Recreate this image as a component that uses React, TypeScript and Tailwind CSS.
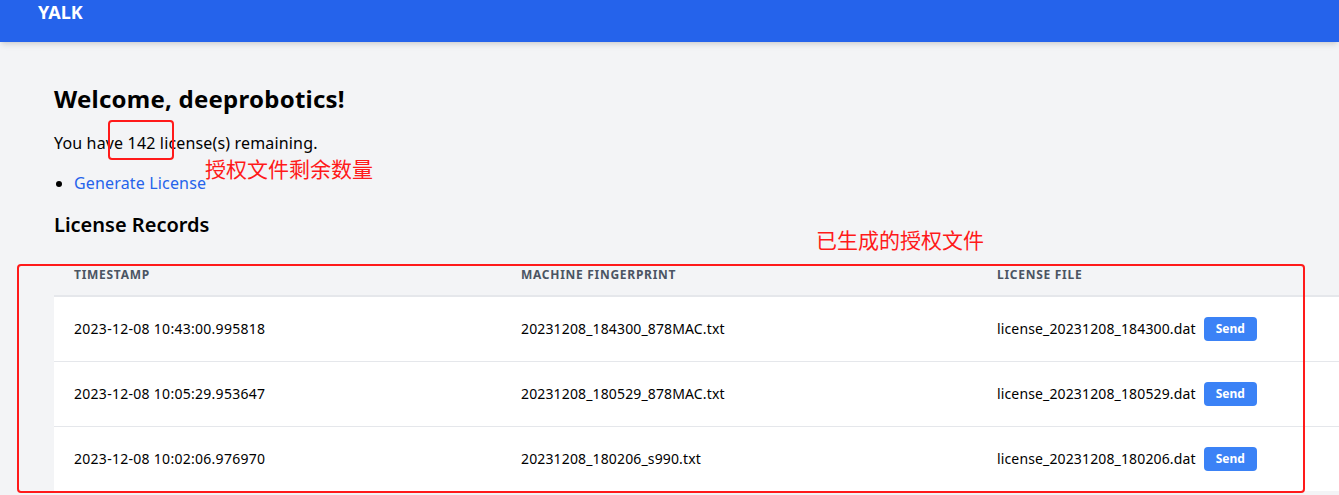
import React from "react";

const rows = [
  { ts: "2023-12-08 10:43:00.995818", fp: "20231208_184300_878MAC.txt", lf: "license_20231208_184300.dat" },
  { ts: "2023-12-08 10:05:29.953647", fp: "20231208_180529_878MAC.txt", lf: "license_20231208_180529.dat" },
  { ts: "2023-12-08 10:02:06.976970", fp: "20231208_180206_s990.txt", lf: "license_20231208_180206.dat" },
];

export default function App() {
  return (
    <div
      className="relative min-h-[495px] w-full overflow-hidden bg-[#f3f4f6] text-black"
      style={{ fontFamily: '"Noto Sans", "Noto Sans CJK SC", sans-serif' }}
    >
      <header className="h-[42px] bg-[#2563eb] pl-[38px] shadow-md">
        <div className="text-[18px] font-bold leading-[24px] text-white">YALK</div>
      </header>
      <main className="pl-[54px] pt-[41px]">
        <h1 className="text-2xl font-bold leading-8 tracking-[0.01em]">Welcome, deeprobotics!</h1>
        <p className="mt-4 text-base leading-6 tracking-[0.01em]">You have 142 license(s) remaining.</p>
        <ul className="mt-4 list-disc pl-5 text-base leading-6 tracking-[0.01em]">
          <li>
            <a className="text-[#2563eb]">Generate License</a>
          </li>
        </ul>
        <h2 className="mt-4 text-xl font-semibold leading-7">License Records</h2>
        <table className="mt-[16px] w-[1300px] table-fixed border-collapse">
          <thead>
            <tr className="border-b-2 border-[#e5e7eb]">
              <th className="w-[447px] px-5 py-3 text-left text-xs font-bold uppercase leading-4 tracking-[0.06em] text-[#4b5563]">Timestamp</th>
              <th className="w-[476px] px-5 py-3 text-left text-xs font-bold uppercase leading-4 tracking-[0.06em] text-[#4b5563]">Machine Fingerprint</th>
              <th className="px-5 py-3 text-left text-xs font-bold uppercase leading-4 tracking-[0.06em] text-[#4b5563]">License File</th>
            </tr>
          </thead>
          <tbody className="bg-white">
            {rows.map((r, i) => (
              <tr key={i} className={i > 0 ? "h-[65px] border-t border-[#e5e7eb]" : "h-[65px]"}>
                <td className="px-5 text-sm tracking-[0.02em]">{r.ts}</td>
                <td className="px-5 text-sm tracking-[0.01em]">{r.fp}</td>
                <td className="px-5 text-sm">
                  <div className="flex items-center gap-2">
                    <span className="tracking-[0.01em]">{r.lf}</span>
                    <button className="h-6 rounded bg-[#3b82f6] px-3 text-xs font-bold text-white">Send</button>
                  </div>
                </td>
              </tr>
            ))}
          </tbody>
        </table>
      </main>

      {/* annotations */}
      <div className="pointer-events-none absolute left-[108px] top-[120px] h-[40px] w-[66px] rounded-sm border-2 border-[#ff1a1a]" />
      <div
        className="pointer-events-none absolute left-[205px] top-[155px] text-[21px] leading-[26px] text-[#ff1a1a]"
        style={{ fontFamily: '"Noto Sans CJK SC", sans-serif' }}
      >
        授权文件剩余数量
      </div>
      <div
        className="pointer-events-none absolute left-[816px] top-[226px] text-[21px] leading-[26px] text-[#ff1a1a]"
        style={{ fontFamily: '"Noto Sans CJK SC", sans-serif' }}
      >
        已生成的授权文件
      </div>
      <div className="pointer-events-none absolute left-[17px] top-[264px] h-[229px] w-[1288px] rounded-sm border-2 border-[#ff1a1a]" />
    </div>
  );
}
